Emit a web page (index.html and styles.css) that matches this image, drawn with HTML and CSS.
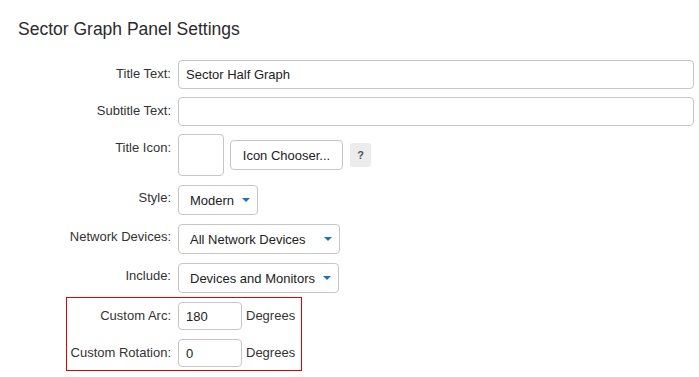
FILE: index.html
```html
<!DOCTYPE html>
<html lang="en">
<head>
    <meta charset="UTF-8">
    <title>Sector Graph Panel Settings</title>
    <link rel="stylesheet" href="styles.css">
</head>
<body>
    <main class="panel">
        <h1 class="panel-title">Sector Graph Panel Settings</h1>

        <div class="form">
            <div class="row">
                <label class="label">Title Text:</label>
                <input class="field field-wide" type="text" value="Sector Half Graph">
            </div>
            <div class="row">
                <label class="label">Subtitle Text:</label>
                <input class="field field-wide" type="text" value="">
            </div>
            <div class="row">
                <label class="label">Title Icon:</label>
                <div class="icon-box"></div>
                <button class="btn">Icon Chooser...</button>
                <span class="help">?</span>
            </div>
            <div class="row">
                <label class="label">Style:</label>
                <div class="select select-style">Modern <span class="caret"></span></div>
            </div>
            <div class="row">
                <label class="label">Network Devices:</label>
                <div class="select select-net">All Network Devices <span class="caret"></span></div>
            </div>
            <div class="row">
                <label class="label">Include:</label>
                <div class="select select-inc">Devices and Monitors <span class="caret"></span></div>
            </div>

            <!-- zona evidenziata -->
            <div class="highlight">
                <div class="row">
                    <label class="label">Custom Arc:</label>
                    <input class="field field-num" type="text" value="180">
                    <span class="unit">Degrees</span>
                </div>
                <div class="row">
                    <label class="label">Custom Rotation:</label>
                    <input class="field field-num" type="text" value="0">
                    <span class="unit">Degrees</span>
                </div>
            </div>
        </div>
    </main>
</body>
</html>
```

FILE: styles.css
```css
/* Stile generale */
body {
    font-family: "Liberation Sans", Arial, sans-serif;
    background: #fff;
    color: #333;
    margin: 0;
    padding: 0;
}

.panel {
    padding: 17px 0 0 18px;
}

.panel-title {
    margin: 0 0 19px 0;
    font-size: 17.5px;
    font-weight: normal;
    line-height: 24px;
    color: #2b2b2b;
}

.form {
    display: flex;
    flex-direction: column;
}

.row {
    display: flex;
    align-items: flex-start;
    margin-bottom: 8px;
    white-space: nowrap;
}

.label {
    flex-shrink: 0;
    width: 153px;
    padding-top: 6px;
    margin-right: 7px;
    text-align: right;
    font-size: 13px;
    line-height: 16px;
    color: #333;
}

.field {
    box-sizing: border-box;
    height: 29px;
    border: 1px solid #c6c6c6;
    border-radius: 4px;
    padding: 0 7px;
    font-family: inherit;
    font-size: 13px;
    color: #222;
    background: #fff;
    outline: none;
}

.field-wide {
    width: 516px;
}

.icon-box {
    box-sizing: border-box;
    width: 46px;
    height: 42px;
    border: 1px solid #c6c6c6;
    border-radius: 4px;
}

.btn {
    box-sizing: border-box;
    margin: 6px 0 0 6px;
    height: 30px;
    width: 113px;
    border: 1px solid #c6c6c6;
    border-radius: 4px;
    background: #fff;
    font-family: inherit;
    font-size: 13px;
    color: #222;
    padding: 0;
}

.help {
    margin: 9px 0 0 7px;
    width: 21px;
    height: 24px;
    border-radius: 3px;
    background: #ececec;
    color: #555;
    font-size: 11px;
    font-weight: bold;
    display: flex;
    align-items: center;
    justify-content: center;
}

.select {
    box-sizing: border-box;
    height: 30px;
    border: 1px solid #c6c6c6;
    border-radius: 4px;
    padding: 0 0 0 11px;
    font-size: 13px;
    color: #222;
    display: flex;
    align-items: center;
    justify-content: space-between;
    gap: 6px;
    margin-top: 1px;
}

.select-style {
    width: 80px;
    padding-right: 7px;
}

.select-net {
    width: 162px;
    padding-right: 7px;
}

.select-inc {
    width: 161px;
    padding-right: 7px;
}

.caret {
    flex-shrink: 0;
    width: 0;
    height: 0;
    border-left: 4px solid transparent;
    border-right: 4px solid transparent;
    border-top: 4px solid #1d72b8;
}

.highlight {
    box-sizing: border-box;
    margin-left: 48px;
    width: 236px;
    border: 1px solid #e00000;
    padding: 4px 0 0 0;
    margin-top: -4px;
}

.highlight .row {
    margin-bottom: 9px;
}

.highlight .row:last-child {
    margin-bottom: 3px;
}

.highlight .label {
    width: 104px;
}

.field-num {
    width: 64px;
    height: 28px;
}

.unit {
    margin-left: 4px;
    padding-top: 6px;
    font-size: 13px;
    line-height: 16px;
    color: #333;
}
```
